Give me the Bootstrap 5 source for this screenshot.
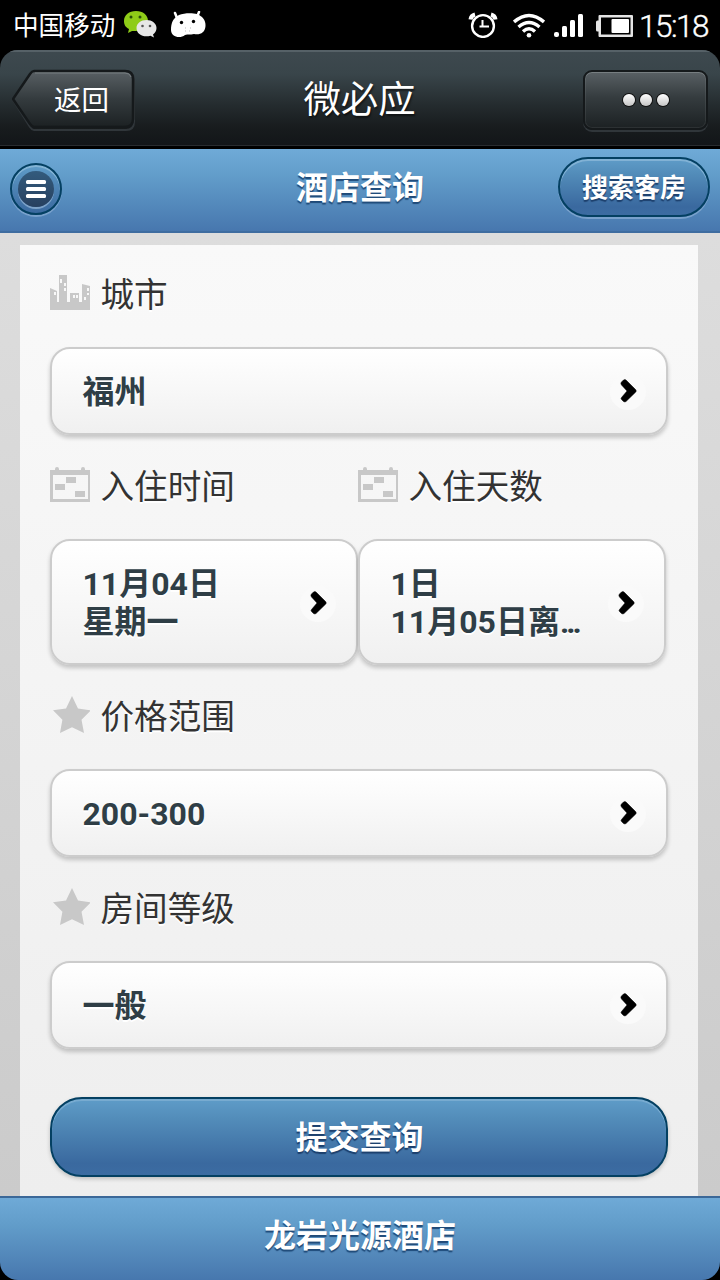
<!DOCTYPE html>
<html lang="zh-CN">
<head>
<meta charset="utf-8">
<meta name="viewport" content="width=device-width, initial-scale=1">
<title>酒店查询</title>
<link href="https://cdn.jsdelivr.net/npm/bootstrap@5.3.0/dist/css/bootstrap.min.css" rel="stylesheet">
<style>
body{background:#000;font-family:Roboto,"Noto Sans CJK SC",sans-serif;line-height:1;overflow:hidden}
.screen{width:720px;height:1280px;overflow:hidden}
svg{display:block;flex:none}
.status-bar{height:50px;padding:0 12px 0 13px;color:#fff}
.carrier{font-size:25.6px;line-height:50px;width:111px;padding-top:1px;white-space:nowrap}
.clock{font-size:31.5px;line-height:50px;margin-left:6px;padding-top:3px;letter-spacing:-1.5px;font-family:Roboto,sans-serif;font-weight:300;-webkit-text-stroke:.4px #fff}
.robot{margin-left:14px}
.wifi{margin-left:15px}
.signal{margin-left:9px}
.battery{margin-left:12px}
.app{height:1230px;border-radius:18px;overflow:hidden}
.title-bar{height:99px;background:linear-gradient(#3e494f,#39454a 25%,#242b2e 58%,#181c1e 80%,#121518);border-bottom:3px solid #000;box-shadow:inset 0 2px #566167,inset 0 -1px #292c2f;padding:4px 12px 0}
.title-text{color:#fff;font-size:37.4px;padding-top:2px;text-shadow:1px 2px 2px #0008}
.back-btn{width:124px;height:62px}
.back-text{color:#fff;font-size:27.5px;left:42px;top:18px;line-height:28px;white-space:nowrap}
.more-btn{width:125px;height:60px;margin-top:-1px;border:2px solid #15191b;border-radius:9px;background:linear-gradient(#596064,#353c3f 45%,#1c2123);box-shadow:inset 0 1px #777e81,inset 0 0 0 1px #ffffff12,0 2px #30363a;gap:5px}
.more-btn i{width:12px;height:12px;border-radius:50%;background:linear-gradient(#fff,#c5c5c5);box-shadow:0 0 0 1px #111}
.bar-blue{background:linear-gradient(#6faad7,#629dca 32%,#4777ae);color:#fff;font-weight:700;text-shadow:0 2px 1px #1f4a78;height:84px}
.page-header{border-bottom:2px solid #3f6da0;padding:0 10px}
.page-header h1,.page-footer{font-size:32px;font-weight:700;line-height:1}
.page-header h1{padding-bottom:4px}
.page-footer{border-top:2px solid #3b6898;padding-bottom:7px}
.side-slot{width:152px}
.btn-glossy{border:2px solid #044062;background:linear-gradient(#5f9cc8,#538dba 25%,#3a699f 85%,#3c6ca2);color:#fff;font-weight:700;text-shadow:0 2px 1px #1c3f6c;line-height:1}
.btn-glossy:hover{color:#fff}
.btn.search-btn{width:152px;height:60px;font-size:26px;border-radius:30px;box-shadow:inset 0 2px #82b2d5,0 2px #79a1cc;margin-top:-6px;padding:2px 0 0}
.menu-btn{width:52px;height:52px;border:2px solid #044062;border-radius:50%;background:linear-gradient(#5f9cc8,#3a699f);box-shadow:inset 0 2px #84b4d5,0 2px #79a1cc;margin-top:-2px}
.menu-btn span{width:36px;height:36px;border-radius:50%;background:linear-gradient(#335b7d,#27405f);box-shadow:0 2px #7da2c8;gap:3px}
.menu-btn b{width:20px;height:4px;border-radius:1.5px;background:#fff}
.content-area{height:963px;background:linear-gradient(#dddddd,#cbcbcb);padding:12px 22px 0 20px}
.panel{height:951px;background:linear-gradient(#f9f9f9,#eee);padding:0 30px}
.field-label{height:104px;font-size:33.6px;color:#333;text-shadow:0 2px #fff;gap:10.5px;white-space:nowrap}
.field-label span{line-height:40px;padding-top:1px}
.first-label{height:102px;padding-bottom:2px}
.field-label svg{margin-top:-5px}
.select-btn{height:88px;width:100%;border:2px solid #ccc;border-radius:20px;background:linear-gradient(#fff,#f0f0f0);box-shadow:0 3px 4px #0003;color:#2f3e46;font-weight:700;font-size:32px;line-height:38px;text-align:left;padding:2px 20px 0 30.5px;text-shadow:0 2px #fff}
.select-btn:hover{color:#2f3e46}
.select-tall{height:126px;padding-right:20px}
.half{width:308px}
.select-btn .value{min-width:0;width:190px;white-space:nowrap}
.ellipsis{letter-spacing:-3px}
.arrow-disc{width:36px;height:36px;border-radius:50%;background:#fafafa;flex:none}
.select-tall .arrow-disc{margin-top:2px}
.btn.submit-btn{width:100%;height:80px;font-size:32px;border-radius:32px;margin-top:48px;box-shadow:inset 0 2px #78abd0,0 2px 4px #0003;padding:6px 0 5px 1px}
</style>
</head>
<body>
<svg width="0" height="0" class="position-absolute" aria-hidden="true">
  <symbol id="calendar" viewBox="0 0 40 36"><path fill="#c8c8c8" fill-rule="evenodd" d="M0 3h5V2q0-2 2-2t2 2v1h22V2q0-2 2-2t2 2v1h5v32H0zM3 8v24h35V8zM16 10h10v6H16zM5 17h10v6H5zM25 24h10v6H25z"/></symbol>
  <symbol id="star" viewBox="0 0 40 38"><path fill="#c8c8c8" d="M22 0l6 12.500 13 1.800-9.500 9.500L34 37l-12-5.800L10 37l2.400-13.200L3 14.300l13-1.800z"/></symbol>
  <symbol id="arrow" viewBox="0 0 36 36"><path d="M11 10Q10.500 9 11.500 8L13.500 6Q15 5 16 6L25.800 15.800Q26.700 17 25.800 18L16 27.500Q15 28.400 13.500 27.500L11.500 25.500Q10.500 24.500 11.500 23.500L17 17L11.500 11Z" stroke="#000" stroke-width=".5"/></symbol>
</svg>
<div class="screen d-flex flex-column">
  <div class="status-bar d-flex align-items-center">
    <span class="carrier">中国移动</span>
    <svg width="33" height="28" viewBox="0 0 33 28"><path d="M12 0c7 0 12 4 12 10S19 20 12 20l-4 0-4 2 1-4C1 16 0 13 0 10 0 4 5 0 12 0z" fill="#8fcc18"/><circle cx="7" cy="6" r="1.500" fill="#28500a"/><circle cx="16" cy="6" r="1.500" fill="#28500a"/><path d="M22.500 9C28 9 32.500 12.500 32.500 17c0 3-1.500 5-3.500 6.500l1 3-3.500-1.800c-7 2-14-1.200-14-7.700C12.500 12.500 17 9 22.500 9z" fill="#e7e7e7"/><circle cx="18.500" cy="15" r="1.300" fill="#555"/><circle cx="26" cy="15" r="1.300" fill="#555"/></svg>
    <svg class="robot" width="35" height="28" viewBox="0 0 35 28"><path d="M4 2l2 5M28 1l-2 5" stroke="#fff" stroke-width="2.500" stroke-linecap="round"/><path d="M8 4c5-2 13-2 18-1 5 2 9 6 8.500 12C34 22 29 24 23 23c-4 1-6 0-9 1-5 4-14 2-14-5C0 12 2 7 8 4z" fill="#fff"/><circle cx="10.500" cy="11.500" r="1.700"/><circle cx="22.500" cy="10.500" r="1.700"/><path d="M14 17h1m4 0h1m-6 3h1m3 0h1" stroke="#bbb"/></svg>
    <div class="ms-auto d-flex align-items-center">
      <svg width="30" height="26" viewBox="0 0 30 26" fill="none" stroke="#fff"><circle cx="15" cy="14" r="10.900" stroke-width="2.400"/><path d="M14.500 8v7.500M11.500 14.500h9.500" stroke-width="2"/><path d="M2.500 7.500Q3 3.500 7 2.500M23 2.500q4 1 4.500 5" stroke-width="4"/></svg>
      <svg class="wifi" width="32" height="25" viewBox="0 0 32 25" fill="none" stroke="#fff" stroke-width="3.400"><path d="M1 9Q16-4 31 9M5.500 14Q16 5 26.500 14M10 18.500Q16 13 22 18.500"/><circle cx="16" cy="22.300" r="2.300" fill="#fff" stroke="none"/></svg>
      <svg class="signal" width="30" height="24" viewBox="0 0 30 24" fill="#fff"><rect y="19" width="5" height="5" rx="2"/><rect x="8" y="13" width="5" height="11" rx="1.500"/><rect x="16" y="7" width="5" height="17" rx="1.500"/><rect x="24" y="1" width="5" height="23" rx="1.500"/></svg>
      <svg class="battery" width="37" height="23" viewBox="0 0 37 23"><path d="M0 8q0-1.500 1.500-1.500H2.500V2q0-1 1-1H36q1 0 1 1v20q0 1-1 1H3.500q-1 0-1-1v-4.500H1.500Q0 17.500 0 16z" fill="#e4e4e4"/><rect x="5" y="3.500" width="29.500" height="17"/><rect x="15.500" y="5" width="17.500" height="14" rx="1" fill="#fff"/></svg>
      <span class="clock">15:18</span>
    </div>
  </div>

  <div class="app">
    <div class="title-bar d-flex align-items-center justify-content-between">
      <div class="back-btn position-relative">
        <svg width="124" height="62" viewBox="0 0 124 62"><defs><linearGradient id="bg" x2="0" y2="1"><stop stop-color="#596064"/><stop offset=".5" stop-color="#343b3e"/><stop offset="1" stop-color="#1c2123"/></linearGradient></defs><path d="M22 3h92q8 0 8 8v42q0 8-8 8H22q-2 0-4-3L1 31" fill="none" stroke="#30363a" stroke-width="2"/><path d="M22 2h91q8 0 8 8v40q0 8-8 8H22q-2 0-4-3L1 30 18 5q2-3 4-3z" fill="url(#bg)" stroke="#15191b" stroke-width="2.500"/><path d="M23 4h90q5 0 6 4" fill="none" stroke="#777e81"/></svg>
        <span class="back-text position-absolute">返回</span>
      </div>
      <div class="title-text">微必应</div>
      <div class="more-btn d-flex align-items-center justify-content-center"><i></i><i></i><i></i></div>
    </div>

    <header class="page-header bar-blue d-flex align-items-center justify-content-between">
      <div class="side-slot"><div class="menu-btn d-flex align-items-center justify-content-center"><span class="d-flex flex-column align-items-center justify-content-center"><b></b><b></b><b></b></span></div></div>
      <h1 class="m-0">酒店查询</h1>
      <button class="btn btn-glossy search-btn">搜索客房</button>
    </header>

    <main class="content-area">
      <div class="panel">
        <div class="field-label first-label d-flex align-items-center">
          <svg width="40" height="35" viewBox="0 0 40 35"><path fill="#c8c8c8" fill-rule="evenodd" d="M0 13l7 3v11h2V0h8v27h3v-9h9v9h3V9l8 2v24H0zM4 17v3h2v-3zM10 4v4h2V4zM14 8v3h2V8zM14 13v3h2v-3zM23 20v3h2v-3zM26 20v3h2v-3zM37 13v3h2v-3zM37 18v2h2v-2zM34 22v3h2v-3z"/></svg>
          <span>城市</span>
        </div>
        <button class="btn select-btn d-flex align-items-center justify-content-between"><span class="value">福州</span><span class="arrow-disc"><svg width="36" height="36"><use href="#arrow"/></svg></span></button>

        <div class="d-flex">
          <div class="half">
            <div class="field-label d-flex align-items-center"><svg width="40" height="36"><use href="#calendar"/></svg><span>入住时间</span></div>
            <button class="btn select-btn select-tall d-flex align-items-center justify-content-between"><span class="value">11月04日<br>星期一</span><span class="arrow-disc"><svg width="36" height="36"><use href="#arrow"/></svg></span></button>
          </div>
          <div class="half">
            <div class="field-label d-flex align-items-center"><svg width="40" height="36"><use href="#calendar"/></svg><span>入住天数</span></div>
            <button class="btn select-btn select-tall d-flex align-items-center justify-content-between"><span class="value">1日<br>11月05日离<span class="ellipsis">...</span></span><span class="arrow-disc"><svg width="36" height="36"><use href="#arrow"/></svg></span></button>
          </div>
        </div>

        <div class="field-label d-flex align-items-center"><svg width="40" height="38"><use href="#star"/></svg><span>价格范围</span></div>
        <button class="btn select-btn d-flex align-items-center justify-content-between"><span class="value">200-300</span><span class="arrow-disc"><svg width="36" height="36"><use href="#arrow"/></svg></span></button>

        <div class="field-label d-flex align-items-center"><svg width="40" height="38"><use href="#star"/></svg><span>房间等级</span></div>
        <button class="btn select-btn d-flex align-items-center justify-content-between"><span class="value">一般</span><span class="arrow-disc"><svg width="36" height="36"><use href="#arrow"/></svg></span></button>

        <button class="btn btn-glossy submit-btn">提交查询</button>
      </div>
    </main>

    <footer class="page-footer bar-blue d-flex align-items-center justify-content-center">龙岩光源酒店</footer>
  </div>
</div>
<script src="https://cdn.jsdelivr.net/npm/bootstrap@5.3.0/dist/js/bootstrap.bundle.min.js"></script>
</body>
</html>
